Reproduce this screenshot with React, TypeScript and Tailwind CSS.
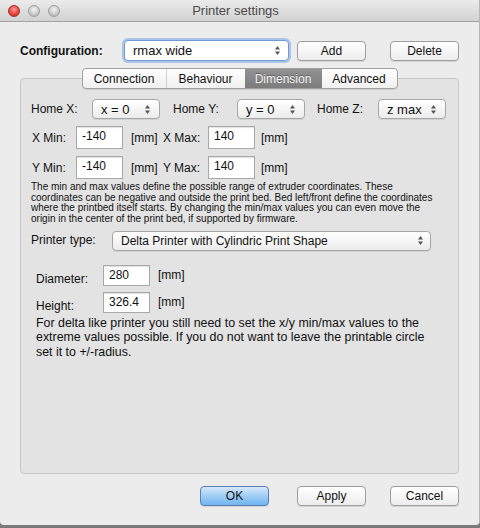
import React from 'react';

const font = { fontFamily: '"Liberation Sans", Arial, sans-serif' };

const Arrows: React.FC = () => (
  <svg width="7" height="11" viewBox="0 0 7 11" className="shrink-0">
    <path d="M3.5 1 L6 4.5 L1 4.5 Z" fill="#555" />
    <path d="M3.5 10 L6 6.5 L1 6.5 Z" fill="#555" />
  </svg>
);

const Popup: React.FC<{ value: string; w: string; big?: boolean }> = ({ value, w, big }) => (
  <div
    className={`${w} h-[20px] flex items-center justify-between rounded-[4px] border border-[#a6a6a6] bg-gradient-to-b from-white to-[#ececec] shadow-[0_1px_0_rgba(0,0,0,0.08)] ${big ? 'pl-[8px] pr-[8px] text-[13px]' : 'pl-[8px] pr-[6px] text-[12px]'}`}
  >
    <span className="text-[#111] leading-none">{value}</span>
    <Arrows />
  </div>
);

const Field: React.FC<{ value: string; h?: string }> = ({ value, h = 'h-[23px]' }) => (
  <div className={`w-[47px] ${h} bg-white border border-[#a8a8a8] shadow-[inset_0_1px_1px_rgba(0,0,0,0.12)] pl-[5px] pt-[2px] text-[12px] text-[#111] leading-[15px]`}>
    {value}
  </div>
);

const Button: React.FC<{ label: string; primary?: boolean; className?: string }> = ({ label, primary, className = '' }) => (
  <div
    className={`w-[69px] h-[20px] flex items-center justify-center rounded-[4px] text-[12px] text-[#111] ${
      primary
        ? 'border border-[#5b7fb5] bg-gradient-to-b from-[#d7e9fb] via-[#9fcdf6] to-[#6fb5f0]'
        : 'border border-[#9d9d9d] bg-gradient-to-b from-white to-[#ededed]'
    } shadow-[0_1px_0_rgba(0,0,0,0.1)] ${className}`}
  >
    {label}
  </div>
);

const tabs = ['Connection', 'Behaviour', 'Dimension', 'Advanced'];
const tabWidths = ['w-[83px]', 'w-[79px]', 'w-[77px]', 'w-[75px]'];

export default function App() {
  return (
    <div className="w-[480px] h-[528px] bg-[#7b7b7b] select-none" style={font}>
      <div className="w-[480px] h-[525px] bg-[#ececec] border-r border-[#b5b5b5] flex flex-col overflow-hidden rounded-b-[4px]">
        {/* Title bar */}
        <div className="h-[22px] shrink-0 flex items-center border-b border-[#a3a3a3] bg-gradient-to-b from-[#ebebeb] to-[#d2d2d2] relative">
          <div className="flex items-center gap-[8px] pl-[8px]">
            <div className="w-[12px] h-[12px] rounded-full bg-[radial-gradient(circle_at_50%_35%,#ff9a95,#e8403a_60%,#b3231d)] border border-[#a0302a]" />
            <div className="w-[12px] h-[12px] rounded-full bg-[radial-gradient(circle_at_50%_35%,#f4f4f4,#c9c9c9_60%,#a8a8a8)] border border-[#9c9c9c]" />
            <div className="w-[12px] h-[12px] rounded-full bg-[radial-gradient(circle_at_50%_35%,#f4f4f4,#c9c9c9_60%,#a8a8a8)] border border-[#9c9c9c]" />
          </div>
          <div className="flex-1 text-center text-[13px] text-[#4a4a4a] -ml-[68px]">Printer settings</div>
        </div>

        {/* Configuration row */}
        <div className="flex items-center mt-[18px] pl-[20px] h-[21px]">
          <div className="w-[104px] text-[12px] font-bold text-[#111]">Configuration:</div>
          <div className="w-[165px] h-[21px] flex items-center justify-between rounded-[4px] border border-[#6f9ad6] bg-white shadow-[0_0_0_2px_rgba(120,165,225,0.55)] pl-[8px] pr-[7px] text-[13px] text-[#111]">
            <span>rmax wide</span>
            <Arrows />
          </div>
          <Button label="Add" className="ml-[8px]" />
          <Button label="Delete" className="ml-[24px] mt-[1px]" />
        </div>

        {/* Tabs */}
        <div className="flex justify-center mt-[7px] relative z-10">
          <div className="flex h-[21px] rounded-[4px] border border-[#a0a0a0] overflow-hidden bg-gradient-to-b from-white to-[#f0f0f0] shadow-[0_1px_0_rgba(0,0,0,0.08)]">
            {tabs.map((t, i) => {
              const active = t === 'Dimension';
              return (
                <div
                  key={t}
                  className={`${tabWidths[i]} flex items-center justify-center text-[12px] ${
                    active
                      ? 'bg-gradient-to-b from-[#929292] to-[#7c7c7c] text-[#f4f4f4] [text-shadow:0_-1px_0_rgba(0,0,0,0.35)]'
                      : 'text-[#111]'
                  } ${i === 1 ? 'border-l border-[#cfcfcf]' : ''}`}
                >
                  {t}
                </div>
              );
            })}
          </div>
        </div>

        {/* Panel */}
        <div className="mx-[20px] -mt-[11px] h-[396px] rounded-[4px] border border-[#c6c6c6] bg-[#e3e3e3] pt-[20px] px-[10px] text-[12px] text-[#111]">
          {/* Home row */}
          <div className="flex items-center h-[20px]">
            <div className="w-[61px]">Home X:</div>
            <Popup value="x = 0" w="w-[68px]" big />
            <div className="w-[64px] ml-[13px]">Home Y:</div>
            <Popup value="y = 0" w="w-[68px]" big />
            <div className="w-[61px] ml-[12px]">Home Z:</div>
            <Popup value="z max" w="w-[68px]" big />
          </div>

          {/* X row */}
          <div className="flex items-center h-[23px] mt-[7px]">
            <div className="w-[45px] pl-[1px]">X Min:</div>
            <Field value="-140" />
            <div className="w-[32px] ml-[8px]">[mm]</div>
            <div className="w-[45px]">X Max:</div>
            <Field value="140" />
            <div className="ml-[6px]">[mm]</div>
          </div>

          {/* Y row */}
          <div className="flex items-center h-[23px] mt-[7px]">
            <div className="w-[45px] pl-[1px]">Y Min:</div>
            <Field value="-140" />
            <div className="w-[32px] ml-[8px]">[mm]</div>
            <div className="w-[45px]">Y Max:</div>
            <Field value="140" />
            <div className="ml-[6px]">[mm]</div>
          </div>

          <div className="mt-[3px] text-[10px] leading-[10.7px] whitespace-nowrap text-[#111]">
            The min and max values define the possible range of extruder coordinates. These
            <br />
            coordinates can be negative and outside the print bed. Bed left/front define the coordinates
            <br />
            where the printbed itself starts. By changing the min/max values you can even move the
            <br />
            origin in the center of the print bed, if supported by firmware.
          </div>

          {/* Printer type */}
          <div className="flex items-center h-[20px] mt-[6px]">
            <div className="w-[81px] -mt-[2px]">Printer type:</div>
            <Popup value="Delta Printer with Cylindric Print Shape" w="w-[319px]" />
          </div>

          {/* Diameter */}
          <div className="flex items-start h-[21px] mt-[14px] pl-[5px]">
            <div className="w-[67px] pt-[5px]">Diameter:</div>
            <Field value="280" h="h-[21px]" />
            <div className="ml-[8px] pt-[1px]">[mm]</div>
          </div>

          {/* Height */}
          <div className="flex items-start h-[21px] mt-[6px] pl-[5px]">
            <div className="w-[67px] pt-[5px]">Height:</div>
            <Field value="326.4" h="h-[21px]" />
            <div className="ml-[8px] pt-[1px]">[mm]</div>
          </div>

          <div className="mt-[3px] pl-[5px] text-[12.4px] leading-[14.5px] whitespace-nowrap">
            For delta like printer you still need to set the x/y min/max values to the
            <br />
            extreme values possible. If you do not want to leave the printable circle
            <br />
            set it to +/-radius.
          </div>
        </div>

        {/* Bottom buttons */}
        <div className="flex items-center mt-[11px] h-[21px] pl-[200px]">
          <Button label="OK" primary />
          <Button label="Apply" className="ml-[28px]" />
          <Button label="Cancel" className="ml-[24px]" />
        </div>
      </div>
    </div>
  );
}
